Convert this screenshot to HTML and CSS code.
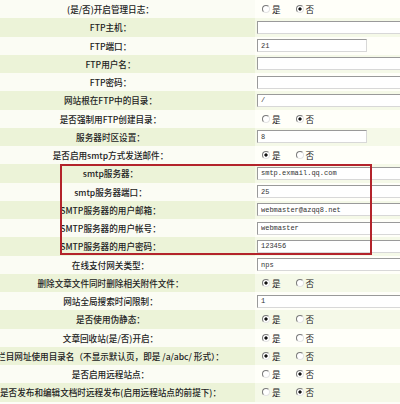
FILE: index.html
```html
<!DOCTYPE html>
<html lang="zh-CN">
  <head>
    <meta charset="UTF-8" />
    <title>系统参数设置</title>
    <link rel="stylesheet" href="styles.css">
  </head>
  <body>
    <div class="page">
      <table class="settings">
        <colgroup>
          <col class="col-label" />
          <col class="col-field" />
        </colgroup>
        <tr>
          <td class="label">(是/否)开启管理日志：</td>
          <td class="field">
            <label class="opt"><input type="radio" name="r1" />是</label>
            <label class="opt"><input type="radio" name="r1" checked />否</label>
          </td>
        </tr>
        <tr>
          <td class="label">FTP主机：</td>
          <td class="field"><input class="text long" type="text" value="" /></td>
        </tr>
        <tr>
          <td class="label">FTP端口：</td>
          <td class="field"><input class="text short" type="text" value="21" /></td>
        </tr>
        <tr>
          <td class="label">FTP用户名：</td>
          <td class="field"><input class="text long" type="text" value="" /></td>
        </tr>
        <tr>
          <td class="label">FTP密码：</td>
          <td class="field"><input class="text long" type="text" value="" /></td>
        </tr>
        <tr>
          <td class="label">网站根在FTP中的目录：</td>
          <td class="field"><input class="text long" type="text" value="/" /></td>
        </tr>
        <tr>
          <td class="label">是否强制用FTP创建目录：</td>
          <td class="field">
            <label class="opt"><input type="radio" name="r2" />是</label>
            <label class="opt"><input type="radio" name="r2" checked />否</label>
          </td>
        </tr>
        <tr>
          <td class="label">服务器时区设置：</td>
          <td class="field"><input class="text short" type="text" value="8" /></td>
        </tr>
        <tr>
          <td class="label">是否启用smtp方式发送邮件：</td>
          <td class="field">
            <label class="opt"><input type="radio" name="r3" checked />是</label>
            <label class="opt"><input type="radio" name="r3" />否</label>
          </td>
        </tr>
        <tr>
          <td class="label">smtp服务器：</td>
          <td class="field"><input class="text long" type="text" value="smtp.exmail.qq.com" /></td>
        </tr>
        <tr>
          <td class="label">smtp服务器端口：</td>
          <td class="field"><input class="text long" type="text" value="25" /></td>
        </tr>
        <tr>
          <td class="label">SMTP服务器的用户邮箱：</td>
          <td class="field"><input class="text long" type="text" value="webmaster@azqq8.net" /></td>
        </tr>
        <tr>
          <td class="label">SMTP服务器的用户帐号：</td>
          <td class="field"><input class="text long" type="text" value="webmaster" /></td>
        </tr>
        <tr>
          <td class="label">SMTP服务器的用户密码：</td>
          <td class="field"><input class="text long" type="text" value="123456" /></td>
        </tr>
        <tr>
          <td class="label">在线支付网关类型：</td>
          <td class="field"><input class="text long" type="text" value="nps" /></td>
        </tr>
        <tr>
          <td class="label">删除文章文件同时删除相关附件文件：</td>
          <td class="field">
            <label class="opt"><input type="radio" name="r4" checked />是</label>
            <label class="opt"><input type="radio" name="r4" />否</label>
          </td>
        </tr>
        <tr>
          <td class="label">网站全局搜索时间限制：</td>
          <td class="field"><input class="text long" type="text" value="1" /></td>
        </tr>
        <tr>
          <td class="label">是否使用伪静态：</td>
          <td class="field">
            <label class="opt"><input type="radio" name="r5" checked />是</label>
            <label class="opt"><input type="radio" name="r5" />否</label>
          </td>
        </tr>
        <tr>
          <td class="label">文章回收站(是/否)开启：</td>
          <td class="field">
            <label class="opt"><input type="radio" name="r6" checked />是</label>
            <label class="opt"><input type="radio" name="r6" />否</label>
          </td>
        </tr>
        <tr>
          <td class="label">栏目网址使用目录名（不显示默认页，即是 /a/abc/ 形式）：</td>
          <td class="field">
            <label class="opt"><input type="radio" name="r7" checked />是</label>
            <label class="opt"><input type="radio" name="r7" />否</label>
          </td>
        </tr>
        <tr>
          <td class="label">是否启用远程站点：</td>
          <td class="field">
            <label class="opt"><input type="radio" name="r8" />是</label>
            <label class="opt"><input type="radio" name="r8" checked />否</label>
          </td>
        </tr>
        <tr>
          <td class="label">是否发布和编辑文档时远程发布(启用远程站点的前提下)：</td>
          <td class="field">
            <label class="opt"><input type="radio" name="r9" />是</label>
            <label class="opt"><input type="radio" name="r9" checked />否</label>
          </td>
        </tr>
      </table>
      <div class="highlight"></div>
    </div>
  </body>
</html>
```

FILE: styles.css
```css
html,
body {
  margin: 0;
  height: 100%;
  overflow: hidden;
  background: #fdfdf7;
}
.page {
  position: relative;
  font-family: "Noto Sans CJK SC", "Noto Sans", sans-serif;
  font-size: 8.6px;
  color: #222;
}
.settings {
  border-collapse: collapse;
  table-layout: fixed;
  margin-left: -40px;
  width: 480px;
}
.col-label {
  width: 295px;
}
.col-field {
  width: 185px;
}
.settings tr {
  height: 18.25px;
}
.settings td {
  padding: 0;
  vertical-align: middle;
  line-height: 12px;
}
.settings tr:nth-child(odd) .label {
  background: #fbfcf4;
}
.settings tr:nth-child(odd) .field {
  background: #fffff9;
}
.settings tr:nth-child(even) .label {
  background: #ecf3d8;
}
.settings tr:nth-child(even) .field {
  background: #f5f9e8;
}
.label {
  text-align: center;
  white-space: nowrap;
  font-weight: 500;
  padding-left: 6px !important;
}
.field {
  padding-left: 2px !important;
  white-space: nowrap;
}
.text {
  box-sizing: border-box;
  height: 13px;
  margin: 0;
  padding: 0 3px;
  border: 1px solid;
  border-color: #9a9a9a #d8d8d8 #d8d8d8 #9a9a9a;
  background: #fff;
  font-family: "Liberation Mono", monospace;
  font-size: 7px;
  color: #333;
  display: block;
}
.text.long {
  width: 200px;
}
.text.short {
  width: 110px;
}
.opt {
  display: inline-flex;
  align-items: center;
  margin-left: 5px;
  margin-right: 8px;
}
.opt input {
  appearance: none;
  box-sizing: border-box;
  width: 8px;
  height: 8px;
  margin: 0 2px 0 0;
  border: 1px solid;
  border-color: #7a7a7a #e4e4e4 #e4e4e4 #7a7a7a;
  border-radius: 50%;
  background: #fff;
}
.opt input:checked {
  background: radial-gradient(circle, #111 0 1.4px, #fff 1.8px);
}
.highlight {
  position: absolute;
  left: 60px;
  top: 164px;
  width: 312px;
  height: 91px;
  box-sizing: border-box;
  border: 2px solid #b3232b;
}
```
